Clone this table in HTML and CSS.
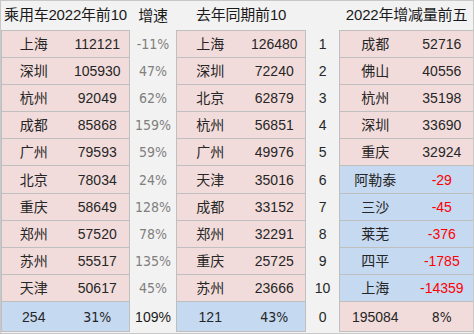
FILE: index.html
```html
<!DOCTYPE html>
<html lang="zh">
<head>
    <meta charset="UTF-8">
    <title>乘用车城市排名</title>
    <link rel="stylesheet" href="styles.css">
</head>
<body>
    <div class="sheet">
        <table class="rank">
            <colgroup>
                <col class="c-a"><col class="c-b"><col class="c-c"><col class="c-d">
                <col class="c-e"><col class="c-f"><col class="c-g"><col class="c-h">
            </colgroup>
            <tr class="head">
                <th colspan="2">乘用车2022年前10</th>
                <th>增速</th>
                <th colspan="2">去年同期前10</th>
                <th></th>
                <th colspan="2">2022年增减量前五</th>
            </tr>
            <tr>
                <td class="pk l">上海</td><td class="pk r">112121</td><td class="gr">-11%</td>
                <td class="pk l">上海</td><td class="pk r">126480</td><td class="rk">1</td>
                <td class="pk l">成都</td><td class="pk r">52716</td>
            </tr>
            <tr>
                <td class="pk l">深圳</td><td class="pk r">105930</td><td class="gr">47%</td>
                <td class="pk l">深圳</td><td class="pk r">72240</td><td class="rk">2</td>
                <td class="pk l">佛山</td><td class="pk r">40556</td>
            </tr>
            <tr>
                <td class="pk l">杭州</td><td class="pk r">92049</td><td class="gr">62%</td>
                <td class="pk l">北京</td><td class="pk r">62879</td><td class="rk">3</td>
                <td class="pk l">杭州</td><td class="pk r">35198</td>
            </tr>
            <tr>
                <td class="pk l">成都</td><td class="pk r">85868</td><td class="gr">159%</td>
                <td class="pk l">杭州</td><td class="pk r">56851</td><td class="rk">4</td>
                <td class="pk l">深圳</td><td class="pk r">33690</td>
            </tr>
            <tr>
                <td class="pk l">广州</td><td class="pk r">79593</td><td class="gr">59%</td>
                <td class="pk l">广州</td><td class="pk r">49976</td><td class="rk">5</td>
                <td class="pk l">重庆</td><td class="pk r">32924</td>
            </tr>
            <tr>
                <td class="pk l">北京</td><td class="pk r">78034</td><td class="gr">24%</td>
                <td class="pk l">天津</td><td class="pk r">35016</td><td class="rk">6</td>
                <td class="bl l">阿勒泰</td><td class="bl r neg">-29</td>
            </tr>
            <tr>
                <td class="pk l">重庆</td><td class="pk r">58649</td><td class="gr">128%</td>
                <td class="pk l">成都</td><td class="pk r">33152</td><td class="rk">7</td>
                <td class="bl l">三沙</td><td class="bl r neg">-45</td>
            </tr>
            <tr>
                <td class="pk l">郑州</td><td class="pk r">57520</td><td class="gr">78%</td>
                <td class="pk l">郑州</td><td class="pk r">32291</td><td class="rk">8</td>
                <td class="bl l">莱芜</td><td class="bl r neg">-376</td>
            </tr>
            <tr>
                <td class="pk l">苏州</td><td class="pk r">55517</td><td class="gr">135%</td>
                <td class="pk l">重庆</td><td class="pk r">25725</td><td class="rk">9</td>
                <td class="bl l">四平</td><td class="bl r neg">-1785</td>
            </tr>
            <tr>
                <td class="pk l">天津</td><td class="pk r">50617</td><td class="gr">45%</td>
                <td class="pk l">苏州</td><td class="pk r">23666</td><td class="rk">10</td>
                <td class="bl l">上海</td><td class="bl r neg">-14359</td>
            </tr>
            <tr class="total">
                <td class="bl l">254</td><td class="bl r pct">31%</td><td class="sum">109%</td>
                <td class="bl l">121</td><td class="bl r pct">43%</td><td class="rk">0</td>
                <td class="pk l">195084</td><td class="pk r pct">8%</td>
            </tr>
        </table>
    </div>
</body>
</html>
```

FILE: styles.css
```css
body {
    margin: 0;
    background-color: #f2f2f2;
    font-family: "Liberation Sans", "Noto Sans CJK SC", sans-serif;
    color: #262626;
}
.sheet {
    width: 474px;
    height: 334px;
    box-sizing: border-box;
    border: 1px solid #c8c8c8;
    overflow: hidden;
}
.rank {
    border-collapse: collapse;
    table-layout: fixed;
    width: 472px;
    font-size: 14px;
    line-height: 18px;
}
.c-a { width: 64px; }
.c-b { width: 64px; }
.c-c { width: 47px; }
.c-d { width: 67px; }
.c-e { width: 62px; }
.c-f { width: 34px; }
.c-g { width: 71px; }
.c-h { width: 63px; }
.rank th,
.rank td {
    padding: 0;
    text-align: center;
    white-space: nowrap;
    height: 26.2px;
}
.head th {
    height: 28.5px;
    font-weight: normal;
    font-size: 15px;
    color: #1a1a1a;
    letter-spacing: -0.2px;
}
.pk {
    background-color: #f2dcdb;
    border-top: 1px solid #bfbfbf;
    border-bottom: 1px solid #bfbfbf;
}
.bl {
    background-color: #c5d9f1;
    border-top: 1px solid #bfbfbf;
    border-bottom: 1px solid #bfbfbf;
}
.l {
    border-left: 1px solid #bfbfbf;
}
.r {
    border-right: 1px solid #bfbfbf;
}
.gr {
    font-family: "Liberation Sans Narrow", "DejaVu Sans Condensed", sans-serif;
    font-stretch: condensed;
    color: #7f7f7f;
    font-size: 14px;
}
.pct {
    font-family: "Liberation Sans Narrow", "DejaVu Sans Condensed", sans-serif;
    font-stretch: condensed;
}
.sum {
    color: #1a1a1a;
}
.rk {
    color: #262626;
}
.neg {
    color: #ff0000;
}
.total td {
    height: 29px;
}
```
